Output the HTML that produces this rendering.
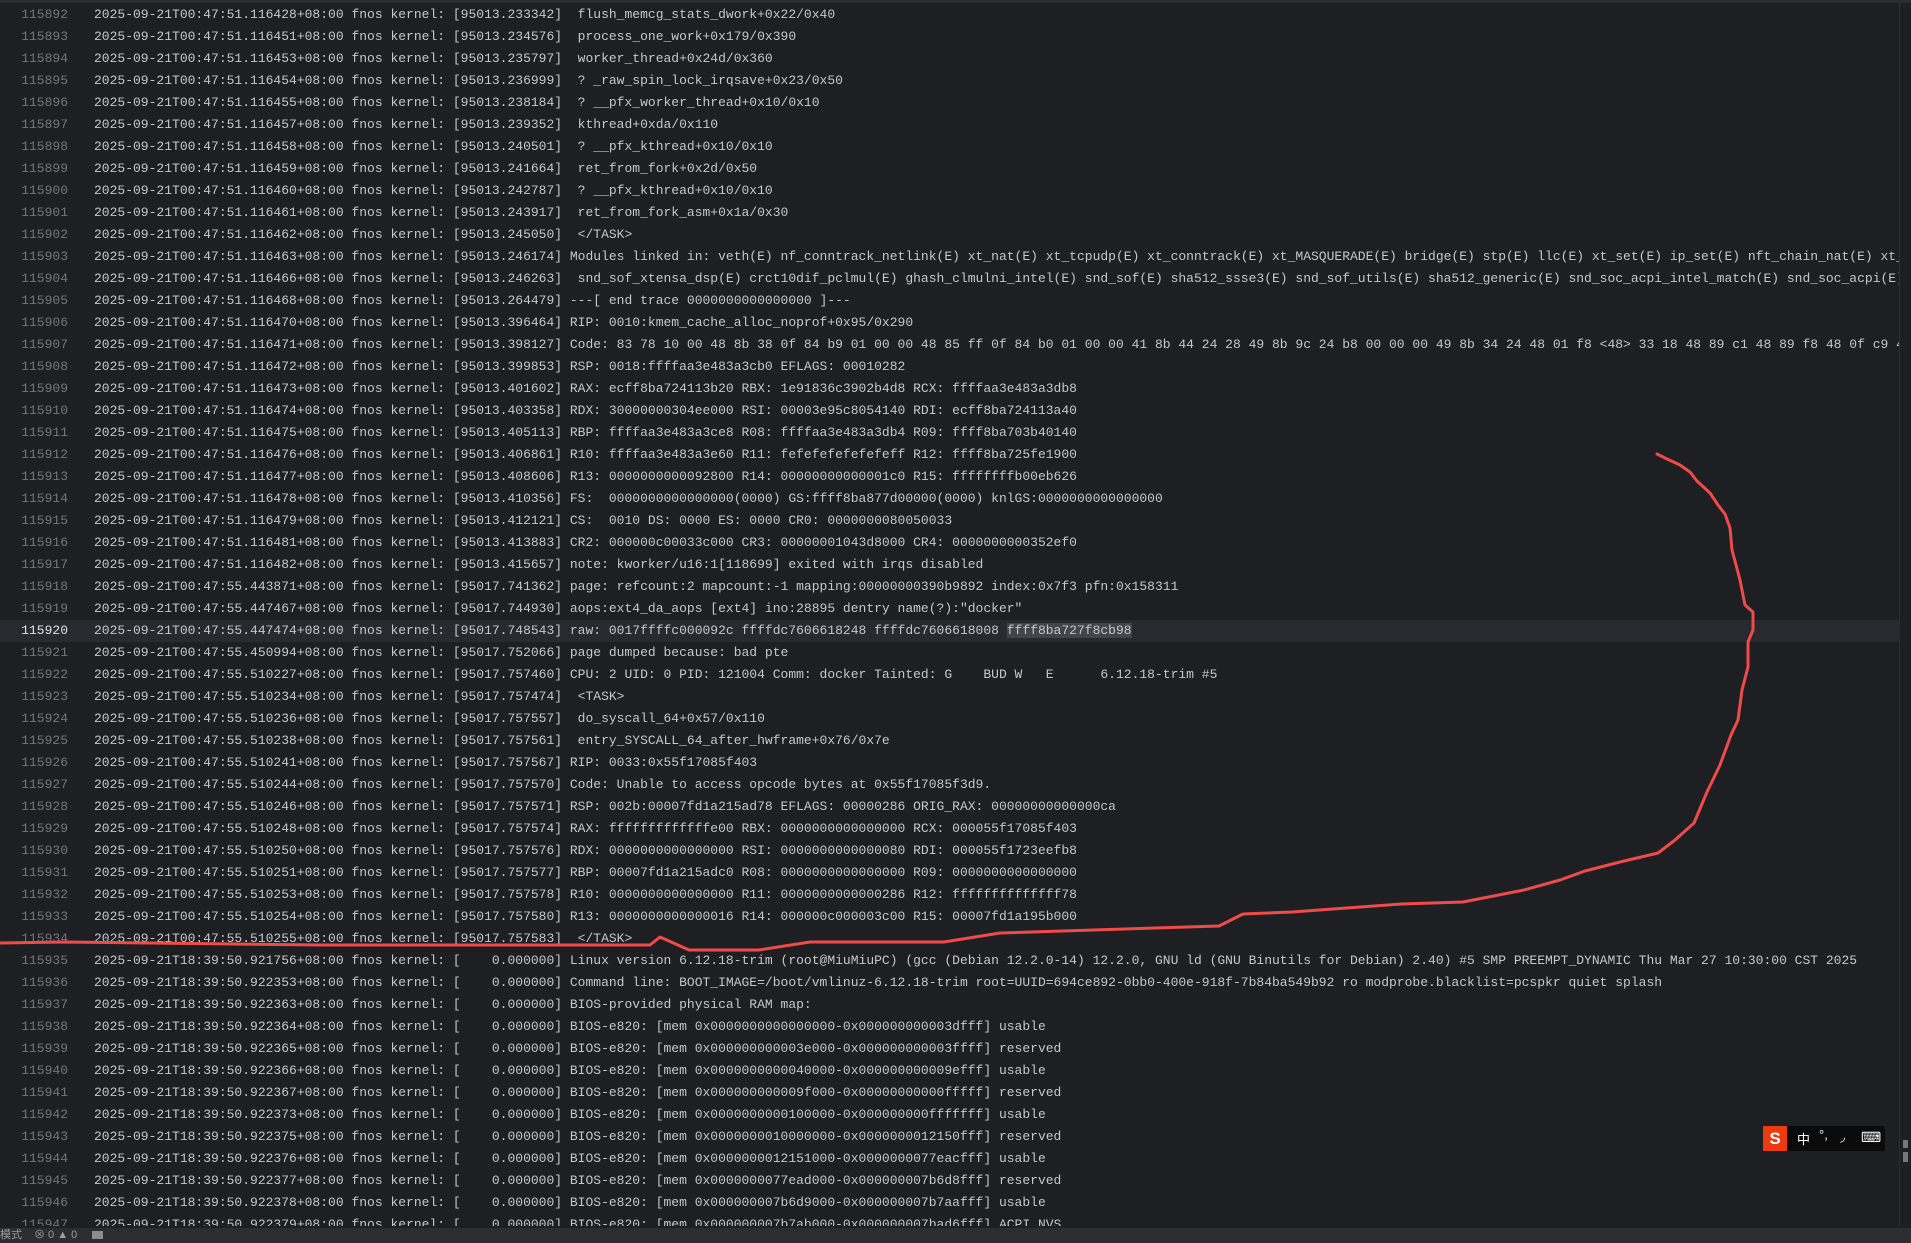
<!DOCTYPE html>
<html><head><meta charset="utf-8">
<style>
html,body{margin:0;padding:0;}
body{width:1911px;height:1243px;overflow:hidden;background:#1e1f22;position:relative;font-family:"Liberation Mono","DejaVu Sans Mono",monospace;font-size:13px;color:#c4c7cd;}
.top{position:absolute;left:0;top:0;width:1911px;height:3px;background:#2b2d30;}
.ed{position:absolute;left:0;top:4px;width:1899px;height:1222px;overflow:hidden;}
.l{position:relative;height:22px;line-height:22px;white-space:pre;}
.n{position:absolute;left:0;width:68px;text-align:right;color:#72767d;}
.t{position:absolute;left:94px;}
.cur{background:#282a30;}
.cur .n{color:#dfe1e5;}
.sel{background:#43454a;}
.vs{position:absolute;left:1899px;top:0;width:1px;height:1226px;background:#2b2d30;}
.thumb{position:absolute;left:1903px;top:1140px;width:5px;height:8px;background:#777;}
.thumb2{position:absolute;left:1903px;top:1152px;width:5px;height:10px;background:#777;}
.status{position:absolute;left:0;top:1228px;width:1911px;height:15px;background:#2b2d30;font-family:"Liberation Sans","Noto Sans CJK SC",sans-serif;font-size:11px;color:#9a9da3;line-height:15px;}
.ime{position:absolute;left:1763px;top:1126px;width:122px;height:25px;background:#0b0b0b;border-radius:2px;color:#fff;font-family:"Liberation Sans","Noto Sans CJK SC",sans-serif;font-size:13px;}
.ime .s{position:absolute;left:0;top:0;width:24px;height:25px;background:#ee3a10;color:#fff;font-weight:bold;font-size:17px;text-align:center;line-height:25px;}
</style></head><body>
<div class="top"></div>
<div class="ed">
<div class="l"><span class="n">115892</span><span class="t">2025-09-21T00:47:51.116428+08:00 fnos kernel: [95013.233342]  flush_memcg_stats_dwork+0x22/0x40</span></div>
<div class="l"><span class="n">115893</span><span class="t">2025-09-21T00:47:51.116451+08:00 fnos kernel: [95013.234576]  process_one_work+0x179/0x390</span></div>
<div class="l"><span class="n">115894</span><span class="t">2025-09-21T00:47:51.116453+08:00 fnos kernel: [95013.235797]  worker_thread+0x24d/0x360</span></div>
<div class="l"><span class="n">115895</span><span class="t">2025-09-21T00:47:51.116454+08:00 fnos kernel: [95013.236999]  ? _raw_spin_lock_irqsave+0x23/0x50</span></div>
<div class="l"><span class="n">115896</span><span class="t">2025-09-21T00:47:51.116455+08:00 fnos kernel: [95013.238184]  ? __pfx_worker_thread+0x10/0x10</span></div>
<div class="l"><span class="n">115897</span><span class="t">2025-09-21T00:47:51.116457+08:00 fnos kernel: [95013.239352]  kthread+0xda/0x110</span></div>
<div class="l"><span class="n">115898</span><span class="t">2025-09-21T00:47:51.116458+08:00 fnos kernel: [95013.240501]  ? __pfx_kthread+0x10/0x10</span></div>
<div class="l"><span class="n">115899</span><span class="t">2025-09-21T00:47:51.116459+08:00 fnos kernel: [95013.241664]  ret_from_fork+0x2d/0x50</span></div>
<div class="l"><span class="n">115900</span><span class="t">2025-09-21T00:47:51.116460+08:00 fnos kernel: [95013.242787]  ? __pfx_kthread+0x10/0x10</span></div>
<div class="l"><span class="n">115901</span><span class="t">2025-09-21T00:47:51.116461+08:00 fnos kernel: [95013.243917]  ret_from_fork_asm+0x1a/0x30</span></div>
<div class="l"><span class="n">115902</span><span class="t">2025-09-21T00:47:51.116462+08:00 fnos kernel: [95013.245050]  &lt;/TASK&gt;</span></div>
<div class="l"><span class="n">115903</span><span class="t">2025-09-21T00:47:51.116463+08:00 fnos kernel: [95013.246174] Modules linked in: veth(E) nf_conntrack_netlink(E) xt_nat(E) xt_tcpudp(E) xt_conntrack(E) xt_MASQUERADE(E) bridge(E) stp(E) llc(E) xt_set(E) ip_set(E) nft_chain_nat(E) xt_addrtype(E)</span></div>
<div class="l"><span class="n">115904</span><span class="t">2025-09-21T00:47:51.116466+08:00 fnos kernel: [95013.246263]  snd_sof_xtensa_dsp(E) crct10dif_pclmul(E) ghash_clmulni_intel(E) snd_sof(E) sha512_ssse3(E) snd_sof_utils(E) sha512_generic(E) snd_soc_acpi_intel_match(E) snd_soc_acpi(E) snd</span></div>
<div class="l"><span class="n">115905</span><span class="t">2025-09-21T00:47:51.116468+08:00 fnos kernel: [95013.264479] ---[ end trace 0000000000000000 ]---</span></div>
<div class="l"><span class="n">115906</span><span class="t">2025-09-21T00:47:51.116470+08:00 fnos kernel: [95013.396464] RIP: 0010:kmem_cache_alloc_noprof+0x95/0x290</span></div>
<div class="l"><span class="n">115907</span><span class="t">2025-09-21T00:47:51.116471+08:00 fnos kernel: [95013.398127] Code: 83 78 10 00 48 8b 38 0f 84 b9 01 00 00 48 85 ff 0f 84 b0 01 00 00 41 8b 44 24 28 49 8b 9c 24 b8 00 00 00 49 8b 34 24 48 01 f8 &lt;48&gt; 33 18 48 89 c1 48 89 f8 48 0f c9 48 33</span></div>
<div class="l"><span class="n">115908</span><span class="t">2025-09-21T00:47:51.116472+08:00 fnos kernel: [95013.399853] RSP: 0018:ffffaa3e483a3cb0 EFLAGS: 00010282</span></div>
<div class="l"><span class="n">115909</span><span class="t">2025-09-21T00:47:51.116473+08:00 fnos kernel: [95013.401602] RAX: ecff8ba724113b20 RBX: 1e91836c3902b4d8 RCX: ffffaa3e483a3db8</span></div>
<div class="l"><span class="n">115910</span><span class="t">2025-09-21T00:47:51.116474+08:00 fnos kernel: [95013.403358] RDX: 30000000304ee000 RSI: 00003e95c8054140 RDI: ecff8ba724113a40</span></div>
<div class="l"><span class="n">115911</span><span class="t">2025-09-21T00:47:51.116475+08:00 fnos kernel: [95013.405113] RBP: ffffaa3e483a3ce8 R08: ffffaa3e483a3db4 R09: ffff8ba703b40140</span></div>
<div class="l"><span class="n">115912</span><span class="t">2025-09-21T00:47:51.116476+08:00 fnos kernel: [95013.406861] R10: ffffaa3e483a3e60 R11: fefefefefefefeff R12: ffff8ba725fe1900</span></div>
<div class="l"><span class="n">115913</span><span class="t">2025-09-21T00:47:51.116477+08:00 fnos kernel: [95013.408606] R13: 0000000000092800 R14: 00000000000001c0 R15: ffffffffb00eb626</span></div>
<div class="l"><span class="n">115914</span><span class="t">2025-09-21T00:47:51.116478+08:00 fnos kernel: [95013.410356] FS:  0000000000000000(0000) GS:ffff8ba877d00000(0000) knlGS:0000000000000000</span></div>
<div class="l"><span class="n">115915</span><span class="t">2025-09-21T00:47:51.116479+08:00 fnos kernel: [95013.412121] CS:  0010 DS: 0000 ES: 0000 CR0: 0000000080050033</span></div>
<div class="l"><span class="n">115916</span><span class="t">2025-09-21T00:47:51.116481+08:00 fnos kernel: [95013.413883] CR2: 000000c00033c000 CR3: 00000001043d8000 CR4: 0000000000352ef0</span></div>
<div class="l"><span class="n">115917</span><span class="t">2025-09-21T00:47:51.116482+08:00 fnos kernel: [95013.415657] note: kworker/u16:1[118699] exited with irqs disabled</span></div>
<div class="l"><span class="n">115918</span><span class="t">2025-09-21T00:47:55.443871+08:00 fnos kernel: [95017.741362] page: refcount:2 mapcount:-1 mapping:00000000390b9892 index:0x7f3 pfn:0x158311</span></div>
<div class="l"><span class="n">115919</span><span class="t">2025-09-21T00:47:55.447467+08:00 fnos kernel: [95017.744930] aops:ext4_da_aops [ext4] ino:28895 dentry name(?):"docker"</span></div>
<div class="l cur"><span class="n">115920</span><span class="t">2025-09-21T00:47:55.447474+08:00 fnos kernel: [95017.748543] raw: 0017ffffc000092c ffffdc7606618248 ffffdc7606618008 <span class="sel">ffff8ba727f8cb98</span></span></div>
<div class="l"><span class="n">115921</span><span class="t">2025-09-21T00:47:55.450994+08:00 fnos kernel: [95017.752066] page dumped because: bad pte</span></div>
<div class="l"><span class="n">115922</span><span class="t">2025-09-21T00:47:55.510227+08:00 fnos kernel: [95017.757460] CPU: 2 UID: 0 PID: 121004 Comm: docker Tainted: G    BUD W   E      6.12.18-trim #5</span></div>
<div class="l"><span class="n">115923</span><span class="t">2025-09-21T00:47:55.510234+08:00 fnos kernel: [95017.757474]  &lt;TASK&gt;</span></div>
<div class="l"><span class="n">115924</span><span class="t">2025-09-21T00:47:55.510236+08:00 fnos kernel: [95017.757557]  do_syscall_64+0x57/0x110</span></div>
<div class="l"><span class="n">115925</span><span class="t">2025-09-21T00:47:55.510238+08:00 fnos kernel: [95017.757561]  entry_SYSCALL_64_after_hwframe+0x76/0x7e</span></div>
<div class="l"><span class="n">115926</span><span class="t">2025-09-21T00:47:55.510241+08:00 fnos kernel: [95017.757567] RIP: 0033:0x55f17085f403</span></div>
<div class="l"><span class="n">115927</span><span class="t">2025-09-21T00:47:55.510244+08:00 fnos kernel: [95017.757570] Code: Unable to access opcode bytes at 0x55f17085f3d9.</span></div>
<div class="l"><span class="n">115928</span><span class="t">2025-09-21T00:47:55.510246+08:00 fnos kernel: [95017.757571] RSP: 002b:00007fd1a215ad78 EFLAGS: 00000286 ORIG_RAX: 00000000000000ca</span></div>
<div class="l"><span class="n">115929</span><span class="t">2025-09-21T00:47:55.510248+08:00 fnos kernel: [95017.757574] RAX: fffffffffffffe00 RBX: 0000000000000000 RCX: 000055f17085f403</span></div>
<div class="l"><span class="n">115930</span><span class="t">2025-09-21T00:47:55.510250+08:00 fnos kernel: [95017.757576] RDX: 0000000000000000 RSI: 0000000000000080 RDI: 000055f1723eefb8</span></div>
<div class="l"><span class="n">115931</span><span class="t">2025-09-21T00:47:55.510251+08:00 fnos kernel: [95017.757577] RBP: 00007fd1a215adc0 R08: 0000000000000000 R09: 0000000000000000</span></div>
<div class="l"><span class="n">115932</span><span class="t">2025-09-21T00:47:55.510253+08:00 fnos kernel: [95017.757578] R10: 0000000000000000 R11: 0000000000000286 R12: ffffffffffffff78</span></div>
<div class="l"><span class="n">115933</span><span class="t">2025-09-21T00:47:55.510254+08:00 fnos kernel: [95017.757580] R13: 0000000000000016 R14: 000000c000003c00 R15: 00007fd1a195b000</span></div>
<div class="l"><span class="n">115934</span><span class="t">2025-09-21T00:47:55.510255+08:00 fnos kernel: [95017.757583]  &lt;/TASK&gt;</span></div>
<div class="l"><span class="n">115935</span><span class="t">2025-09-21T18:39:50.921756+08:00 fnos kernel: [    0.000000] Linux version 6.12.18-trim (root@MiuMiuPC) (gcc (Debian 12.2.0-14) 12.2.0, GNU ld (GNU Binutils for Debian) 2.40) #5 SMP PREEMPT_DYNAMIC Thu Mar 27 10:30:00 CST 2025</span></div>
<div class="l"><span class="n">115936</span><span class="t">2025-09-21T18:39:50.922353+08:00 fnos kernel: [    0.000000] Command line: BOOT_IMAGE=/boot/vmlinuz-6.12.18-trim root=UUID=694ce892-0bb0-400e-918f-7b84ba549b92 ro modprobe.blacklist=pcspkr quiet splash</span></div>
<div class="l"><span class="n">115937</span><span class="t">2025-09-21T18:39:50.922363+08:00 fnos kernel: [    0.000000] BIOS-provided physical RAM map:</span></div>
<div class="l"><span class="n">115938</span><span class="t">2025-09-21T18:39:50.922364+08:00 fnos kernel: [    0.000000] BIOS-e820: [mem 0x0000000000000000-0x000000000003dfff] usable</span></div>
<div class="l"><span class="n">115939</span><span class="t">2025-09-21T18:39:50.922365+08:00 fnos kernel: [    0.000000] BIOS-e820: [mem 0x000000000003e000-0x000000000003ffff] reserved</span></div>
<div class="l"><span class="n">115940</span><span class="t">2025-09-21T18:39:50.922366+08:00 fnos kernel: [    0.000000] BIOS-e820: [mem 0x0000000000040000-0x000000000009efff] usable</span></div>
<div class="l"><span class="n">115941</span><span class="t">2025-09-21T18:39:50.922367+08:00 fnos kernel: [    0.000000] BIOS-e820: [mem 0x000000000009f000-0x00000000000fffff] reserved</span></div>
<div class="l"><span class="n">115942</span><span class="t">2025-09-21T18:39:50.922373+08:00 fnos kernel: [    0.000000] BIOS-e820: [mem 0x0000000000100000-0x000000000fffffff] usable</span></div>
<div class="l"><span class="n">115943</span><span class="t">2025-09-21T18:39:50.922375+08:00 fnos kernel: [    0.000000] BIOS-e820: [mem 0x0000000010000000-0x0000000012150fff] reserved</span></div>
<div class="l"><span class="n">115944</span><span class="t">2025-09-21T18:39:50.922376+08:00 fnos kernel: [    0.000000] BIOS-e820: [mem 0x0000000012151000-0x0000000077eacfff] usable</span></div>
<div class="l"><span class="n">115945</span><span class="t">2025-09-21T18:39:50.922377+08:00 fnos kernel: [    0.000000] BIOS-e820: [mem 0x0000000077ead000-0x000000007b6d8fff] reserved</span></div>
<div class="l"><span class="n">115946</span><span class="t">2025-09-21T18:39:50.922378+08:00 fnos kernel: [    0.000000] BIOS-e820: [mem 0x000000007b6d9000-0x000000007b7aafff] usable</span></div>
<div class="l"><span class="n">115947</span><span class="t">2025-09-21T18:39:50.922379+08:00 fnos kernel: [    0.000000] BIOS-e820: [mem 0x000000007b7ab000-0x000000007bad6fff] ACPI NVS</span></div>
</div>
<div class="vs"></div>
<div class="thumb"></div><div class="thumb2"></div>
<svg style="position:absolute;left:0;top:0" width="1911" height="1243">
<path d="M1657,454 L1665,458 L1680,465 L1690,472 L1697,481 L1710,493 L1718,505 L1725,514 L1730,528 L1732,550 L1740,580 L1745,605 L1753,612 L1753,630 L1748,642 L1748,667 L1742,690 L1738,720 L1731,735 L1720,765 L1707,792 L1694,823 L1675,840 L1658,853 L1620,862 L1585,871 L1560,880 L1524,890 L1463,902 L1402,904 L1292,912 L1243,914 L1219,926 L1000,933 L944,942 L810,942 L759,950 L689,950 L660,937 L650,945 L548,945 L319,945 L64,942 L0,943" fill="none" stroke="#f04a4a" stroke-width="3" stroke-linejoin="round" stroke-linecap="round"/>
</svg>
<div class="ime"><div class="s">S</div>
<span style="position:absolute;left:34px;top:3px;">中</span>
<span style="position:absolute;left:56px;top:1px;">°,</span>
<span style="position:absolute;left:77px;top:3px;">◞</span>
<span style="position:absolute;left:98px;top:3px;font-size:14px;">⌨</span></div>
<div class="status"><span style="position:absolute;left:0;">模式</span><span style="position:absolute;left:34px;">⊗ 0 ▲ 0</span><span style="position:absolute;left:92px;top:3px;width:11px;height:8px;background:#8a8d92;"></span></div>
</body></html>
